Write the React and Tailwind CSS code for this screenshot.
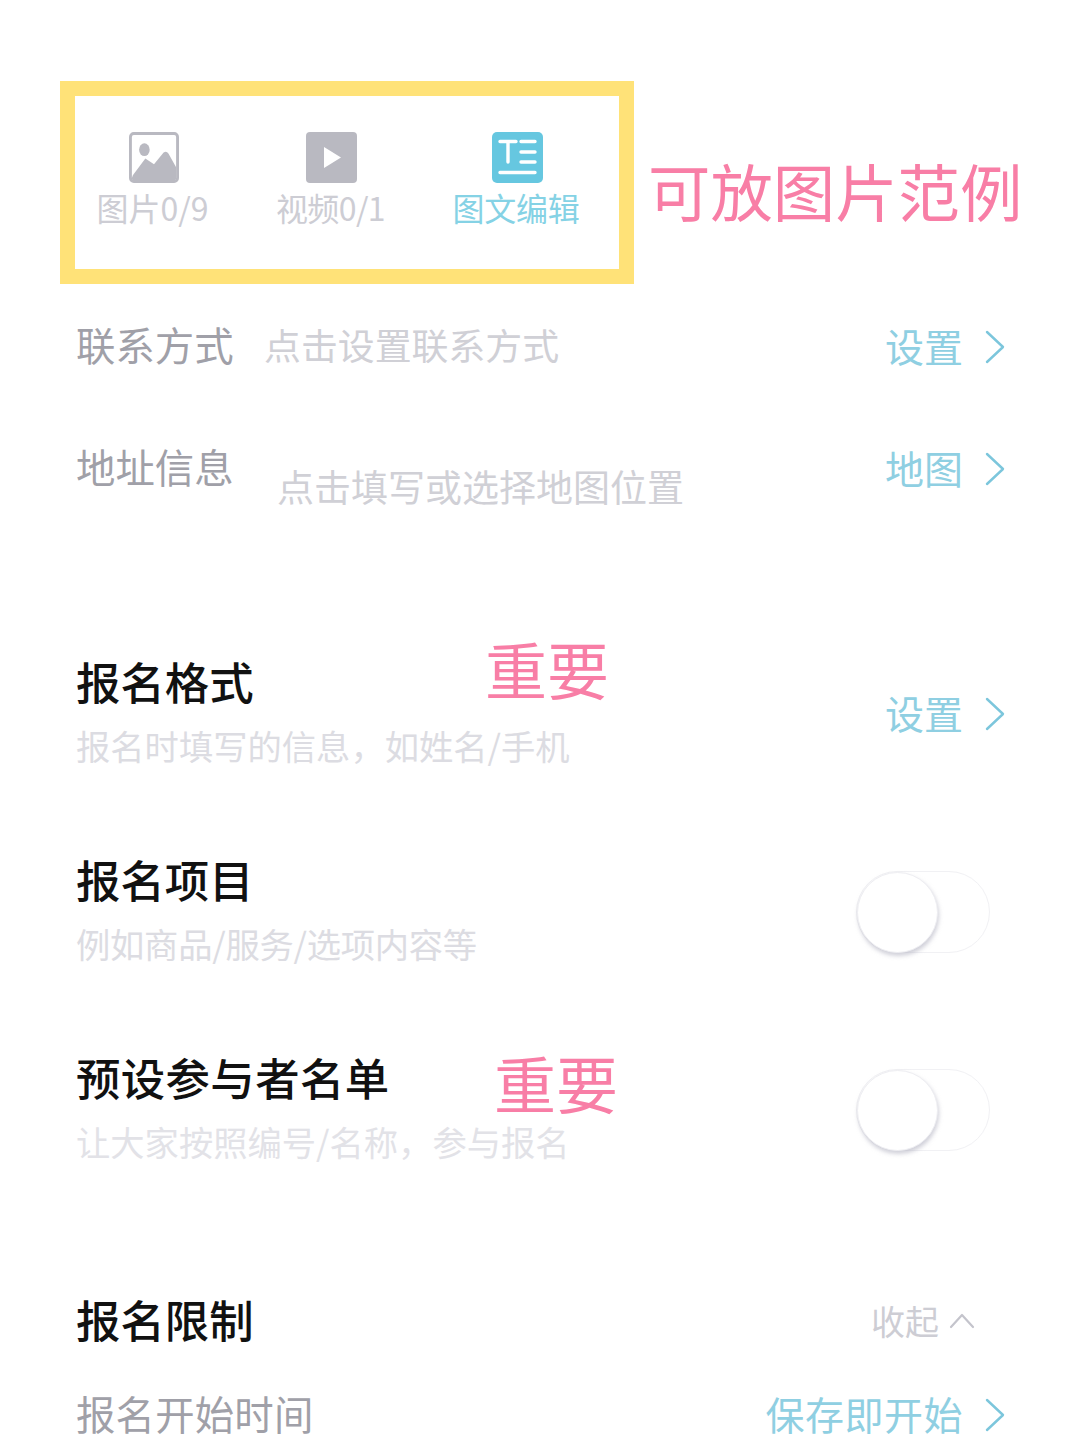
const FONT = "font-['Noto_Sans_CJK_SC','Noto_Sans_CJK_JP',sans-serif]";

function Chevron() {
  return (
    <svg width="20" height="34" viewBox="0 0 20 34" fill="none" className="shrink-0">
      <path d="M2 2 L18 17 L2 32" stroke="#7cc6dc" strokeWidth="2.4" strokeLinecap="round" strokeLinejoin="round" />
    </svg>
  );
}

function Toggle() {
  return (
    <div className="relative w-[134px] h-[82px] rounded-full border border-[#f1f1f4] bg-white">
      <div className="absolute left-0 top-0 w-[81px] h-[81px] rounded-full bg-white border border-[#eeeef2] shadow-[1px_3px_4px_rgba(170,170,185,0.55)]" />
    </div>
  );
}

function Link({ children, cls = "" }) {
  return (
    <div className={`flex items-center gap-[22px] text-[39px] leading-[46px] font-normal text-[#8fcfe2] ${cls}`}>
      <span className="mb-[4px]">{children}</span>
      <Chevron />
    </div>
  );
}

function Tool({ icon, label, color, w }) {
  return (
    <div className={`flex flex-col items-center ${w}`}>
      {icon}
      <span className={`mt-[2px] mr-[3px] text-[32px] leading-[44px] font-normal whitespace-nowrap ${color}`}>{label}</span>
    </div>
  );
}

function Sub({ children, cls = "text-[#dcdce2]" }) {
  return <div className={`text-[34.3px] leading-[44px] font-normal whitespace-nowrap ${cls}`}>{children}</div>;
}

function Title({ children, cls = "" }) {
  return <div className={`text-[44.4px] leading-[56px] font-medium text-[#111] whitespace-nowrap ${cls}`}>{children}</div>;
}

function Important({ cls }) {
  return <span className={`absolute text-[62px] leading-[70px] font-normal text-[#f87ea6] whitespace-nowrap ${cls}`}>重要</span>;
}

export default function App() {
  return (
    <div className={`${FONT} relative w-[1080px] h-[1439px] overflow-hidden bg-white`}>
      <div className="pt-[81px] pl-[60px] flex items-center">
        <div className="w-[574px] h-[203px] border-[15px] border-[#ffe278] flex items-start pt-[36px] pl-[9px]">
          <Tool
            w="w-[140px]"
            color="text-[#cdcdd4]"
            label="图片0/9"
            icon={
              <svg width="50" height="51" viewBox="0 0 52 52" preserveAspectRatio="none">
                <rect x="1.5" y="1.5" width="49" height="49" rx="3.5" fill="#fff" stroke="#b9b9c1" strokeWidth="3" />
                <path d="M4 44 L17 27 L26 33 L36 21 Q39 19 41 22 L49 36 V47 Q49 50 46 50 H6 Q3 50 3 47 Z" fill="#b9b9c1" />
                <ellipse cx="16" cy="18" rx="5.5" ry="6.5" fill="#b9b9c1" />
              </svg>
            }
          />
          <Tool
            w="w-[216px]"
            color="text-[#cdcdd4] tracking-[-0.6px]"
            label="视频0/1"
            icon={
              <svg width="52" height="51" viewBox="0 0 52 51">
                <rect width="51" height="51" rx="4" fill="#b9b9c1" />
                <path d="M18 15 L35 25.5 L18 36 Z" fill="#fff" />
              </svg>
            }
          />
          <Tool
            w="w-[155px]"
            color="text-[#85d2e5] tracking-[-0.3px]"
            label="图文编辑"
            icon={
              <svg width="52" height="51" viewBox="0 0 52 51">
                <rect width="51" height="51" rx="5" fill="#66c7e0" />
                <path d="M8 9.5 H24 M16 9.5 V30" stroke="#fff" strokeWidth="3.4" strokeLinecap="round" fill="none" />
                <path d="M29 9.5 H43 M29 20 H43 M29 30 H43 M8 40.5 H43" stroke="#fff" strokeWidth="3.4" strokeLinecap="round" fill="none" />
              </svg>
            }
          />
        </div>
        <span className="ml-[14px] mt-[14px] text-[62.4px] leading-[72px] font-normal text-[#f87ea6] whitespace-nowrap">可放图片范例</span>
      </div>

      <div className="pl-[76px] pr-[75px]">
        <div className="mt-[40px] h-[46px] flex items-center justify-between">
          <div className="flex items-center mb-[6px]">
            <span className="w-[188px] text-[39.4px] leading-[46px] font-normal text-[#a0a0a8] whitespace-nowrap">联系方式</span>
            <span className="text-[36.9px] leading-[46px] font-normal text-[#d0d0d6] whitespace-nowrap">点击设置联系方式</span>
          </div>
          <Link>设置</Link>
        </div>

        <div className="mt-[76px] h-[70px] flex items-start justify-between">
          <div className="flex items-start -mt-[3px]">
            <span className="w-[201px] text-[39.4px] leading-[46px] font-normal text-[#a0a0a8] whitespace-nowrap">地址信息</span>
            <span className="mt-[20px] text-[37px] leading-[46px] font-normal text-[#d0d0d6] whitespace-nowrap">点击填写或选择地图位置</span>
          </div>
          <Link cls="-mt-[2px]">地图</Link>
        </div>

        <div className="relative mt-[143px] h-[110px] flex items-center justify-between">
          <div className="mb-[8px]">
            <Title>报名格式</Title>
            <div className="mt-[14px]"><Sub>报名时填写的信息，如姓名/手机</Sub></div>
          </div>
          <Link>设置</Link>
          <Important cls="left-[409px] -top-[26px]" />
        </div>

        <div className="mt-[88px] h-[110px] flex items-center justify-between pr-[15px]">
          <div className="mb-[8px]">
            <Title>报名项目</Title>
            <div className="mt-[14px]"><Sub cls="text-[#dcdce2] tracking-[-0.25px]">例如商品/服务/选项内容等</Sub></div>
          </div>
          <Toggle />
        </div>

        <div className="relative mt-[88px] h-[110px] flex items-center justify-between pr-[15px]">
          <div className="mb-[8px]">
            <Title cls="tracking-[0.4px]">预设参与者名单</Title>
            <div className="mt-[14px]"><Sub cls="text-[#e2e2e7]">让大家按照编号/名称，参与报名</Sub></div>
          </div>
          <Toggle />
          <Important cls="left-[418px] -top-[8px]" />
        </div>

        <div className="mt-[126px] h-[56px] flex items-center justify-between pr-[30px]">
          <Title>报名限制</Title>
          <div className="flex items-center gap-[10px] mt-[4px] text-[34px] leading-[44px] font-normal text-[#cdcdd4]">
            <span>收起</span>
            <svg width="26" height="16" viewBox="0 0 26 16" fill="none">
              <path d="M2 14 L13 2 L24 14" stroke="#c4c4cc" strokeWidth="2.2" strokeLinecap="round" strokeLinejoin="round" />
            </svg>
          </div>
        </div>

        <div className="mt-[43px] h-[46px] flex items-center justify-between">
          <span className="text-[39.4px] leading-[46px] font-normal text-[#a0a0a8] whitespace-nowrap tracking-[0.2px]">报名开始时间</span>
          <Link cls="mt-[4px] tracking-[0.5px]">保存即开始</Link>
        </div>
      </div>
    </div>
  );
}
